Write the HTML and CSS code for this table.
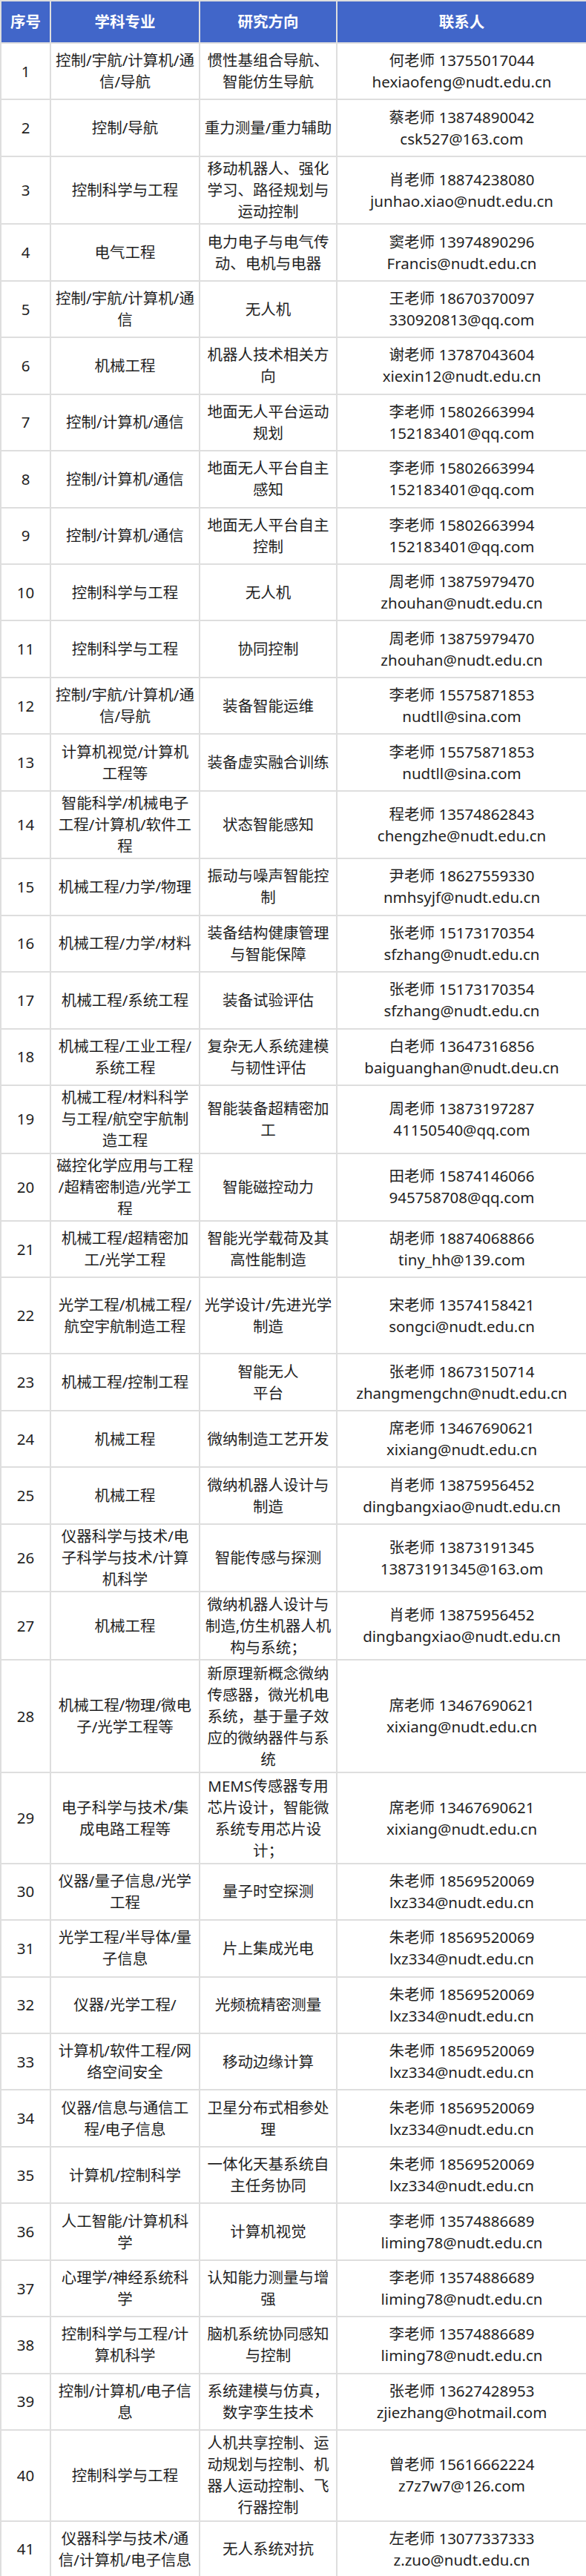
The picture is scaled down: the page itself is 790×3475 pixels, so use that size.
FILE: index.html
```html
<!DOCTYPE html>
<html lang="zh-CN">
<head>
<meta charset="utf-8">
<title>联系人列表</title>
<link rel="stylesheet" href="styles.css">
</head>
<body>
<table class="sheet">
  <colgroup>
    <col class="c-no">
    <col class="c-major">
    <col class="c-dir">
    <col class="c-contact">
  </colgroup>
  <thead>
    <tr><th>序号</th><th>学科专业</th><th>研究方向</th><th>联系人</th></tr>
  </thead>
  <tbody>
    <tr class="l2"><td>1</td><td>控制/宇航/计算机/通<br>信/导航</td><td>惯性基组合导航、<br>智能仿生导航</td><td>何老师 13755017044<br>hexiaofeng@nudt.edu.cn</td></tr>
    <tr class="l2"><td>2</td><td>控制/导航</td><td>重力测量/重力辅助</td><td>蔡老师 13874890042<br>csk527@163.com</td></tr>
    <tr class="l3"><td>3</td><td>控制科学与工程</td><td>移动机器人、强化<br>学习、路径规划与<br>运动控制</td><td>肖老师 18874238080<br>junhao.xiao@nudt.edu.cn</td></tr>
    <tr class="l2"><td>4</td><td>电气工程</td><td>电力电子与电气传<br>动、电机与电器</td><td>窦老师 13974890296<br>Francis@nudt.edu.cn</td></tr>
    <tr class="l2"><td>5</td><td>控制/宇航/计算机/通<br>信</td><td>无人机</td><td>王老师 18670370097<br>330920813@qq.com</td></tr>
    <tr class="l2"><td>6</td><td>机械工程</td><td>机器人技术相关方<br>向</td><td>谢老师 13787043604<br>xiexin12@nudt.edu.cn</td></tr>
    <tr class="l2"><td>7</td><td>控制/计算机/通信</td><td>地面无人平台运动<br>规划</td><td>李老师 15802663994<br>152183401@qq.com</td></tr>
    <tr class="l2"><td>8</td><td>控制/计算机/通信</td><td>地面无人平台自主<br>感知</td><td>李老师 15802663994<br>152183401@qq.com</td></tr>
    <tr class="l2"><td>9</td><td>控制/计算机/通信</td><td>地面无人平台自主<br>控制</td><td>李老师 15802663994<br>152183401@qq.com</td></tr>
    <tr class="l2"><td>10</td><td>控制科学与工程</td><td>无人机</td><td>周老师 13875979470<br>zhouhan@nudt.edu.cn</td></tr>
    <tr class="l2"><td>11</td><td>控制科学与工程</td><td>协同控制</td><td>周老师 13875979470<br>zhouhan@nudt.edu.cn</td></tr>
    <tr class="l2"><td>12</td><td>控制/宇航/计算机/通<br>信/导航</td><td>装备智能运维</td><td>李老师 15575871853<br>nudtll@sina.com</td></tr>
    <tr class="l2"><td>13</td><td>计算机视觉/计算机<br>工程等</td><td>装备虚实融合训练</td><td>李老师 15575871853<br>nudtll@sina.com</td></tr>
    <tr class="l3"><td>14</td><td>智能科学/机械电子<br>工程/计算机/软件工<br>程</td><td>状态智能感知</td><td>程老师 13574862843<br>chengzhe@nudt.edu.cn</td></tr>
    <tr class="l2"><td>15</td><td>机械工程/力学/物理</td><td>振动与噪声智能控<br>制</td><td>尹老师 18627559330<br>nmhsyjf@nudt.edu.cn</td></tr>
    <tr class="l2"><td>16</td><td>机械工程/力学/材料</td><td>装备结构健康管理<br>与智能保障</td><td>张老师 15173170354<br>sfzhang@nudt.edu.cn</td></tr>
    <tr class="l2"><td>17</td><td>机械工程/系统工程</td><td>装备试验评估</td><td>张老师 15173170354<br>sfzhang@nudt.edu.cn</td></tr>
    <tr class="l2"><td>18</td><td>机械工程/工业工程/<br>系统工程</td><td>复杂无人系统建模<br>与韧性评估</td><td>白老师 13647316856<br>baiguanghan@nudt.deu.cn</td></tr>
    <tr class="l3"><td>19</td><td>机械工程/材料科学<br>与工程/航空宇航制<br>造工程</td><td>智能装备超精密加<br>工</td><td>周老师 13873197287<br>41150540@qq.com</td></tr>
    <tr class="l3"><td>20</td><td>磁控化学应用与工程<br>/超精密制造/光学工<br>程</td><td>智能磁控动力</td><td>田老师 15874146066<br>945758708@qq.com</td></tr>
    <tr class="l2"><td>21</td><td>机械工程/超精密加<br>工/光学工程</td><td>智能光学载荷及其<br>高性能制造</td><td>胡老师 18874068866<br>tiny_hh@139.com</td></tr>
    <tr class="tall"><td>22</td><td>光学工程/机械工程/<br>航空宇航制造工程</td><td>光学设计/先进光学<br>制造</td><td>宋老师 13574158421<br>songci@nudt.edu.cn</td></tr>
    <tr class="l2"><td>23</td><td>机械工程/控制工程</td><td>智能无人<br>平台</td><td>张老师 18673150714<br>zhangmengchn@nudt.edu.cn</td></tr>
    <tr class="l2"><td>24</td><td>机械工程</td><td>微纳制造工艺开发</td><td>席老师 13467690621<br>xixiang@nudt.edu.cn</td></tr>
    <tr class="l2"><td>25</td><td>机械工程</td><td>微纳机器人设计与<br>制造</td><td>肖老师 13875956452<br>dingbangxiao@nudt.edu.cn</td></tr>
    <tr class="l3"><td>26</td><td>仪器科学与技术/电<br>子科学与技术/计算<br>机科学</td><td>智能传感与探测</td><td>张老师 13873191345<br>13873191345@163.om</td></tr>
    <tr class="l3"><td>27</td><td>机械工程</td><td>微纳机器人设计与<br>制造,仿生机器人机<br>构与系统；</td><td>肖老师 13875956452<br>dingbangxiao@nudt.edu.cn</td></tr>
    <tr class="l5"><td>28</td><td>机械工程/物理/微电<br>子/光学工程等</td><td>新原理新概念微纳<br>传感器，微光机电<br>系统，基于量子效<br>应的微纳器件与系<br>统</td><td>席老师 13467690621<br>xixiang@nudt.edu.cn</td></tr>
    <tr class="l4"><td>29</td><td>电子科学与技术/集<br>成电路工程等</td><td>MEMS传感器专用<br>芯片设计，智能微<br>系统专用芯片设<br>计；</td><td>席老师 13467690621<br>xixiang@nudt.edu.cn</td></tr>
    <tr class="l2"><td>30</td><td>仪器/量子信息/光学<br>工程</td><td>量子时空探测</td><td>朱老师 18569520069<br>lxz334@nudt.edu.cn</td></tr>
    <tr class="l2"><td>31</td><td>光学工程/半导体/量<br>子信息</td><td>片上集成光电</td><td>朱老师 18569520069<br>lxz334@nudt.edu.cn</td></tr>
    <tr class="l2"><td>32</td><td>仪器/光学工程/</td><td>光频梳精密测量</td><td>朱老师 18569520069<br>lxz334@nudt.edu.cn</td></tr>
    <tr class="l2"><td>33</td><td>计算机/软件工程/网<br>络空间安全</td><td>移动边缘计算</td><td>朱老师 18569520069<br>lxz334@nudt.edu.cn</td></tr>
    <tr class="l2"><td>34</td><td>仪器/信息与通信工<br>程/电子信息</td><td>卫星分布式相参处<br>理</td><td>朱老师 18569520069<br>lxz334@nudt.edu.cn</td></tr>
    <tr class="l2"><td>35</td><td>计算机/控制科学</td><td>一体化天基系统自<br>主任务协同</td><td>朱老师 18569520069<br>lxz334@nudt.edu.cn</td></tr>
    <tr class="l2"><td>36</td><td>人工智能/计算机科<br>学</td><td>计算机视觉</td><td>李老师 13574886689<br>liming78@nudt.edu.cn</td></tr>
    <tr class="l2"><td>37</td><td>心理学/神经系统科<br>学</td><td>认知能力测量与增<br>强</td><td>李老师 13574886689<br>liming78@nudt.edu.cn</td></tr>
    <tr class="l2"><td>38</td><td>控制科学与工程/计<br>算机科学</td><td>脑机系统协同感知<br>与控制</td><td>李老师 13574886689<br>liming78@nudt.edu.cn</td></tr>
    <tr class="l2"><td>39</td><td>控制/计算机/电子信<br>息</td><td>系统建模与仿真，<br>数字孪生技术</td><td>张老师 13627428953<br>zjiezhang@hotmail.com</td></tr>
    <tr class="l4"><td>40</td><td>控制科学与工程</td><td>人机共享控制、运<br>动规划与控制、机<br>器人运动控制、飞<br>行器控制</td><td>曾老师 15616662224<br>z7z7w7@126.com</td></tr>
    <tr class="l2"><td>41</td><td>仪器科学与技术/通<br>信/计算机/电子信息</td><td>无人系统对抗</td><td>左老师 13077337333<br>z.zuo@nudt.edu.cn</td></tr>
  </tbody>
</table>
</body>
</html>
```

FILE: styles.css
```css
html, body {
  margin: 0;
  padding: 0;
  background: #ffffff;
}

.sheet {
  width: 790px;
  table-layout: fixed;
  border-collapse: collapse;
  font-family: "Noto Sans", "Noto Sans CJK SC", sans-serif;
  font-size: 20.5px;
  line-height: 29px;
  color: #1f1f1f;
}

.c-no { width: 67px; }
.c-major { width: 201px; }
.c-dir { width: 185px; }
.c-contact { width: 337px; }

.sheet th,
.sheet td {
  border: 2px solid #dedede;
  padding: 0 2px;
  text-align: center;
  vertical-align: middle;
  white-space: nowrap;
  overflow: hidden;
}

.sheet thead th {
  height: 55px;
  background: #4166c9;
  color: #ffffff;
  font-weight: 700;
}

.l2 { height: 76.45px; }
.l3 { height: 91.5px; }
.l4 { height: 122.4px; }
.l5 { height: 152.6px; }
.tall { height: 103px; }
```
